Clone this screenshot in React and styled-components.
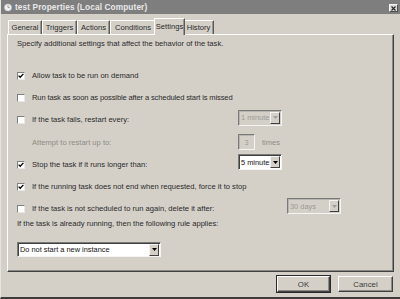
import React from 'react';
import styled, { createGlobalStyle, css } from 'styled-components';

const Global = createGlobalStyle`
  html, body { margin: 0; padding: 0; background: #d4d0c8; }
  body { font-family: "Liberation Sans", Arial, sans-serif; }
  * { box-sizing: border-box; }
`;

const Window = styled.div`
  width: 400px;
  height: 299px;
  background: #d4d0c8;
  display: flex;
  flex-direction: column;
  overflow: hidden;
  border-bottom: 2px solid #3c3c3c;
  border-left: 1px solid #e6e4df;
`;

const TitleBar = styled.div`
  height: 14px;
  flex: none;
  background: #7e7e7e;
  display: flex;
  align-items: center;
  padding: 0 2px 0 3px;
  gap: 3px;
  color: #e8e8e8;
  font-weight: bold;
  font-size: 8.3px;
  letter-spacing: 0.1px;
`;

const TitleText = styled.span`
  flex: 1;
  white-space: nowrap;
`;

const CloseBtn = styled.div`
  width: 9px;
  height: 8px;
  margin-top: 2px;
  background: #dcdad6;
  border: 1px solid #f4f4f4;
  border-right-color: #505050;
  border-bottom-color: #505050;
  display: flex;
  align-items: center;
  justify-content: center;
`;

const Body = styled.div`
  flex: 1;
  display: flex;
  flex-direction: column;
  padding: 4px 6px 0 6px;
`;

const TabStrip = styled.div`
  display: flex;
  align-items: flex-end;
  height: 16px;
  padding-left: 1px;
  font-size: 7.6px;
  color: #2a2a2a;
`;

const Tab = styled.div`
  width: ${p => p.$w}px;
  height: 14px;
  display: flex;
  align-items: center;
  justify-content: center;
  border: 1px solid #ffffff;
  border-bottom: none;
  border-right: 1px solid #5a5a5a;
  box-shadow: inset -1px 0 0 #9a978f;
  white-space: nowrap;
  ${p => p.$active && css`
    height: 17px;
    margin: 0 -2px -1px;
    padding-bottom: 1px;
    background: #d4d0c8;
    position: relative;
    z-index: 1;
  `}
`;

const Panel = styled.div`
  height: 238px;
  border: 1px solid #ffffff;
  border-right: 1px solid #404040;
  border-bottom: 1px solid #404040;
  box-shadow: inset -1px -1px 0 #8c8a84;
  padding: 4px 0 0 9px;
  display: flex;
  flex-direction: column;
  font-size: 7.6px;
  color: #2a2a2a;
`;

const Para = styled.div`
  height: 10px;
  line-height: 10px;
  white-space: nowrap;
  margin-bottom: ${p => p.$mb || 0}px;
`;

const Row = styled.div`
  height: ${p => p.$h || 22}px;
  display: grid;
  grid-template-columns: 15px 206px auto;
  align-items: center;
`;

const Label = styled.span`
  white-space: nowrap;
  color: ${p => (p.$disabled ? '#8f8c86' : '#2a2a2a')};
  grid-column: ${p => (p.$span ? '2 / 4' : 'auto')};
  letter-spacing: ${p => p.$ls || 0}px;
`;

const Box = styled.span`
  width: 8px;
  height: 8px;
  background: #ffffff;
  border: 1px solid #808080;
  border-right-color: #e8e8e8;
  border-bottom-color: #e8e8e8;
  display: flex;
  align-items: center;
  justify-content: center;
  margin-top: 1px;
`;

const Controls = styled.div`
  display: flex;
  align-items: center;
  gap: 7px;
  margin-left: ${p => p.$ml || 0}px;
  margin-top: ${p => p.$mt ?? -4}px;
`;

const SelectBox = styled.div`
  width: ${p => p.$w}px;
  height: ${p => p.$h || 16}px;
  display: flex;
  align-items: center;
  background: ${p => (p.$disabled ? '#d4d0c8' : '#ffffff')};
  color: ${p => (p.$disabled ? '#9d9a94' : '#111')};
  border: 1px solid #7a7a7a;
  border-right-color: #f4f4f4;
  border-bottom-color: #f4f4f4;
  box-shadow: inset 1px 1px 0 ${p => (p.$disabled ? '#b8b5ae' : '#404040')};
  padding-left: 2px;
  white-space: nowrap;
  font-size: 7.4px;
`;

const SelText = styled.span`
  flex: 1;
  overflow: hidden;
`;

const ArrowBtn = styled.span`
  width: 10px;
  height: 12px;
  flex: none;
  margin-right: 1px;
  background: #d4d0c8;
  border: 1px solid #f4f4f4;
  border-right-color: #404040;
  border-bottom-color: #404040;
  display: flex;
  align-items: center;
  justify-content: center;
`;

const NumBox = styled(SelectBox)`
  justify-content: center;
  padding: 0;
`;

const Footer = styled.div`
  display: flex;
  justify-content: flex-end;
  gap: 8px;
  padding: 4px 1px 0 0;
`;

const Button = styled.div`
  width: ${p => p.$w}px;
  height: 16px;
  display: flex;
  align-items: center;
  justify-content: center;
  font-size: 7.8px;
  color: #3a3a3a;
  background: #d4d0c8;
  border: 1px solid #ffffff;
  border-right-color: #404040;
  border-bottom-color: #404040;
  box-shadow: inset -1px -1px 0 #8c8a84;
  ${p => p.$default && css`
    outline: 1px solid #2a2a2a;
    outline-offset: 0;
  `}
`;

const Check = ({ checked }) => (
  <Box>
    {checked && (
      <svg width="6" height="6" viewBox="0 0 6 6">
        <path d="M0.6 2.6 L2.2 4.3 L5.4 0.9" fill="none" stroke="#000" strokeWidth="1.3" />
      </svg>
    )}
  </Box>
);

const Arrow = ({ disabled }) => (
  <ArrowBtn>
    <svg width="5" height="3" viewBox="0 0 5 3">
      <path d="M0 0 H5 L2.5 3 Z" fill={disabled ? '#a09d97' : '#000'} />
    </svg>
  </ArrowBtn>
);

const Select = ({ w, value, disabled, h }) => (
  <SelectBox $w={w} $h={h} $disabled={disabled}>
    <SelText>{value}</SelText>
    <Arrow disabled={disabled} />
  </SelectBox>
);

const tabs = [
  ['General', 34],
  ['Triggers', 35],
  ['Actions', 33],
  ['Conditions', 46],
  ['Settings', 31],
  ['History', 31],
];

export default function App() {
  return (
    <Window>
      <Global />
      <TitleBar>
        <svg width="8" height="9" viewBox="0 0 8 9">
          <circle cx="4" cy="4.5" r="3.6" fill="#f2f2f2" stroke="#bdbdbd" strokeWidth="0.6" />
          <path d="M4 2 V4.6 H5.8" fill="none" stroke="#8a8a8a" strokeWidth="0.8" />
        </svg>
        <TitleText>test Properties (Local Computer)</TitleText>
        <CloseBtn>
          <svg width="5" height="5" viewBox="0 0 5 5">
            <path d="M0.5 0.5 L4.5 4.5 M4.5 0.5 L0.5 4.5" stroke="#222" strokeWidth="1.1" />
          </svg>
        </CloseBtn>
      </TitleBar>
      <Body>
        <TabStrip>
          {tabs.map(([t, w]) => (
            <Tab key={t} $w={w} $active={t === 'Settings'}>{t}</Tab>
          ))}
        </TabStrip>
        <Panel>
          <Para $mb={15}>Specify additional settings that affect the behavior of the task.</Para>
          <Row>
            <Check checked />
            <Label>Allow task to be run on demand</Label>
          </Row>
          <Row>
            <Check />
            <Label $ls={-0.15}>Run task as soon as possible after a scheduled start is missed</Label>
          </Row>
          <Row $h={23}>
            <Check />
            <Label>If the task fails, restart every:</Label>
            <Controls>
              <Select w={44} value="1 minute" disabled />
            </Controls>
          </Row>
          <Row>
            <span />
            <Label $disabled>Attempt to restart up to:</Label>
            <Controls $mt={0}>
              <NumBox $w={17} $disabled>3</NumBox>
              <Label $disabled>times</Label>
            </Controls>
          </Row>
          <Row>
            <Check checked />
            <Label>Stop the task if it runs longer than:</Label>
            <Controls>
              <Select w={44} value="5 minute:" />
            </Controls>
          </Row>
          <Row>
            <Check checked />
            <Label $span>If the running task does not end when requested, force it to stop</Label>
          </Row>
          <Row>
            <Check />
            <Label>If the task is not scheduled to run again, delete it after:</Label>
            <Controls $ml={49}>
              <Select w={54} value="30 days" disabled />
            </Controls>
          </Row>
          <Para $mb={13}>If the task is already running, then the following rule applies:</Para>
          <Select w={144} h={15} value="Do not start a new instance" />
        </Panel>
        <Footer>
          <Button $w={53} $default>OK</Button>
          <Button $w={55}>Cancel</Button>
        </Footer>
      </Body>
    </Window>
  );
}
